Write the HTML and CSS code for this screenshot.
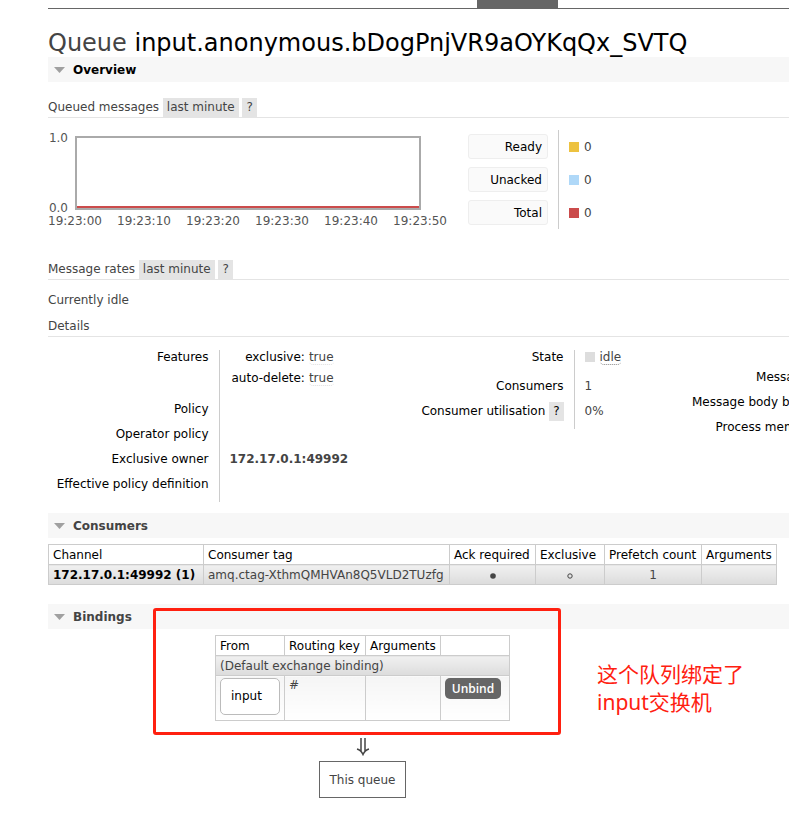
FILE: index.html
```html
<!DOCTYPE html>
<html lang="en">
<head>
<meta charset="utf-8">
<title>RabbitMQ Management</title>
<link rel="stylesheet" href="styles.css">
</head>
<body>
<nav class="menu"><span class="tab"></span></nav>
<main class="main">
  <h1>Queue <b>input.anonymous.bDogPnjVR9aOYKqQx_SVTQ</b></h1>

  <section>
    <h2 class="section-title current"><svg class="caret" viewBox="0 0 11 6"><path d="M0 0H11L5.500 6Z"/></svg>Overview</h2>
    <h3>Queued messages <a class="tag" href="#">last minute</a> <a class="tag help" href="#">?</a></h3>
    <div class="queued">
      <div class="chart">
        <div class="axis-y"><span>1.0</span><span>0.0</span></div>
        <div class="plot"></div>
        <div class="axis-x"><span>19:23:00</span><span>19:23:10</span><span>19:23:20</span><span>19:23:30</span><span>19:23:40</span><span>19:23:50</span></div>
      </div>
      <table class="legend">
        <tr><th><button class="series">Ready</button></th><td><i class="swatch ready"></i>0</td></tr>
        <tr><th><button class="series">Unacked</button></th><td><i class="swatch unacked"></i>0</td></tr>
        <tr><th><button class="series">Total</button></th><td><i class="swatch total"></i>0</td></tr>
      </table>
    </div>
    <h3>Message rates <a class="tag" href="#">last minute</a> <a class="tag help" href="#">?</a></h3>
    <p class="idle-note">Currently idle</p>
    <h3 class="details-title">Details</h3>
    <div class="details">
      <table class="facts policy">
        <tr class="features"><th>Features</th><td>
          <table class="mini">
            <tr><th>exclusive:</th><td><abbr class="faint">true</abbr></td></tr>
            <tr><th>auto-delete:</th><td><abbr class="faint">true</abbr></td></tr>
          </table>
        </td></tr>
        <tr><th>Policy</th><td></td></tr>
        <tr><th>Operator policy</th><td></td></tr>
        <tr><th>Exclusive owner</th><td><b>172.17.0.1:49992</b></td></tr>
        <tr><th>Effective policy definition</th><td></td></tr>
      </table>
      <table class="facts state">
        <tr class="state-row"><th>State</th><td><i class="swatch idle"></i><abbr>idle</abbr></td></tr>
        <tr><th>Consumers</th><td>1</td></tr>
        <tr><th>Consumer utilisation <a class="tag help" href="#">?</a></th><td>0%</td></tr>
      </table>
      <table class="facts totals">
        <tr><th>Messages <a class="tag help" href="#">?</a></th></tr>
        <tr><th>Message body bytes <a class="tag help" href="#">?</a></th></tr>
        <tr><th>Process memory <a class="tag help" href="#">?</a></th></tr>
      </table>
    </div>
  </section>

  <section>
    <h2 class="section-title"><svg class="caret" viewBox="0 0 11 6"><path d="M0 0H11L5.500 6Z"/></svg>Consumers</h2>
    <table class="list consumers">
      <thead><tr><th>Channel</th><th class="c-tag">Consumer tag</th><th class="c-ack">Ack required</th><th class="c-excl">Exclusive</th><th class="c-pre">Prefetch count</th><th class="c-args">Arguments</th></tr></thead>
      <tbody><tr class="alt"><td><a class="channel" href="#">172.17.0.1:49992 (1)</a></td><td>amq.ctag-XthmQMHVAn8Q5VLD2TUzfg</td><td class="center"><svg class="dot" viewBox="0 0 6 6"><circle cx="3" cy="3" r="2.800"/></svg></td><td class="center"><svg class="dot ring" viewBox="0 0 6 6"><circle cx="3" cy="3" r="2.200"/></svg></td><td class="center">1</td><td></td></tr></tbody>
    </table>
  </section>

  <section class="bindings">
    <h2 class="section-title"><svg class="caret" viewBox="0 0 11 6"><path d="M0 0H11L5.500 6Z"/></svg>Bindings</h2>
    <div class="binding-flow">
      <table class="list binding-table">
        <thead><tr><th class="b-from">From</th><th class="b-key">Routing key</th><th class="b-args">Arguments</th><th class="b-act"></th></tr></thead>
        <tbody>
          <tr class="alt"><td colspan="4">(Default exchange binding)</td></tr>
          <tr class="plain"><td><a class="exchange" href="#">input</a></td><td>#</td><td></td><td><button class="unbind">Unbind</button></td></tr>
        </tbody>
      </table>
      <svg class="arrow" viewBox="0 0 14 18"><path d="M5 0V14M9 0V14M1 11Q5 12 7 16.500Q9 12 13 11"/></svg>
      <div class="queue-box">This queue</div>
    </div>
    <div class="highlight"></div>
    <p class="note" lang="zh-CN">这个队列绑定了<br>input交换机</p>
  </section>
</main>
</body>
</html>
```
FILE: styles.css
```css
* { box-sizing: border-box; }
body {
  margin: 0;
  background: #fff;
  color: #444;
  font: 12px/14px "DejaVu Sans", Verdana, sans-serif;
  overflow-x: hidden;
}
a { color: inherit; text-decoration: none; }
button { font: inherit; }
table { border-collapse: collapse; }
th { color: #000; font-weight: normal; }
th, td { padding: 0; }
abbr { border-bottom: 1px dotted #888; border-radius: 4px; }
abbr.faint { border-color: #ddd; }

.menu {
  display: flex;
  height: 9px;
  margin-left: 48px;
  border-bottom: 1px solid #666;
}
.tab { width: 81px; margin-left: 429px; background: #666; }
.main { padding-left: 48px; overflow: hidden; }

h1 {
  margin: 20px 0 0;
  font-size: 24px;
  line-height: 28px;
  font-weight: normal;
  white-space: nowrap;
}
h1 b { color: #000; font-weight: normal; }
.section-title {
  display: flex;
  align-items: center;
  gap: 8px;
  height: 25px;
  margin: 0;
  padding-left: 6px;
  background: #f7f7f7;
  font-size: 12px;
}
.current { color: #000; }
.caret { width: 11px; height: 6px; fill: #a0a0a0; }
h3 {
  margin: 16px 0 0;
  border-bottom: 1px solid #e4e4e4;
  font-size: 12px;
  line-height: 19px;
  font-weight: normal;
}
.tag { display: inline-block; padding: 0 4px; background: #e4e4e4; line-height: 19px; }

.queued { display: flex; gap: 21px; margin: 12px 0 31px; }
.chart {
  display: grid;
  grid-template: 74px 16px / 26px 347px;
  width: 399px;
  margin-top: 6px;
  color: #545454;
}
.axis-y {
  display: flex;
  flex-direction: column;
  justify-content: space-between;
  padding-right: 6px;
  margin: -5px 0;
  text-align: right;
}
.plot { display: flex; margin-left: 1px; border: 2px solid #aaa; }
.plot::after { content: ""; flex: 1; align-self: flex-end; height: 2px; background: #cb4b4b; }
.axis-x {
  grid-column: 1 / 3;
  display: flex;
  justify-content: space-between;
  width: 399px;
  padding-top: 4px;
}
.legend th { padding: 4px 10px 4px 0; }
.legend td { border-left: 1px solid #ccc; padding-left: 10px; }
.series {
  display: block;
  width: 80px;
  height: 25px;
  padding: 0 5px;
  border: 1px solid #eee;
  border-radius: 3px;
  background: #fafafa;
  color: #000;
  text-align: right;
}
.swatch { display: inline-block; width: 10px; height: 10px; margin-right: 5px; vertical-align: -1px; }
.ready { background: #edc240; }
.unacked { background: #afd8f8; }
.total { background: #cb4b4b; }
.idle { background: #ddd; }

.idle-note { margin: 13px 0 0; }
h3.details-title { margin-top: 10px; }

.details { display: flex; align-items: flex-start; margin: 13px 0 11px; white-space: nowrap; }
.facts { flex: none; }
.facts > tbody > tr > th {
  height: 25px;
  padding: 0 10px 11px;
  text-align: right;
  vertical-align: top;
}
.facts > tbody > tr > td { border-left: 1px solid #ccc; padding: 0 10px; vertical-align: top; }
.policy { width: 363px; table-layout: fixed; }
.policy > tbody > tr > th { width: 171px; padding-left: 0; }
.features { height: 52px; }
.state { width: 271px; }
.state > tbody > tr > th { width: 163px; }
.state-row { height: 29px; }
.totals { margin-top: 20px; }
.facts .tag { margin: -3px 0; }
.mini th { padding: 0 4px 7px 2px; text-align: right; }
.mini td { padding: 0; vertical-align: top; }

.list th, .list td { border: 1px solid #ccc; padding: 3px 4px 2px; text-align: left; white-space: nowrap; }
.list .center { text-align: center; }
.alt td { background: linear-gradient(#f0f0f0, #dcdcdc); }
.plain td { background: linear-gradient(#f5f5f5, #fff); vertical-align: top; }
.consumers { width: 729px; margin: 6px 0 19px; table-layout: fixed; }
.c-tag { width: 246px; }
.c-ack { width: 86px; }
.c-excl { width: 69px; }
.c-pre { width: 97px; }
.c-args { width: 75px; }
.channel { color: #000; font-weight: bold; }
.dot { width: 6px; height: 6px; fill: #444; }
.ring { fill: none; stroke: #444; }

.bindings { position: relative; }
.binding-flow {
  display: flex;
  flex-direction: column;
  align-items: center;
  width: 629px;
  padding-top: 6px;
}
.binding-table { width: 295px; table-layout: fixed; }
.b-key { width: 81px; }
.b-args { width: 75px; }
.b-act { width: 69px; }
.list .plain td { padding-top: 2px; }
.exchange {
  display: block;
  height: 37px;
  margin-bottom: 3px;
  padding: 0 10px;
  border: 1px solid #bbb;
  border-radius: 5px;
  background: #fff;
  color: #000;
  line-height: 35px;
}
.unbind {
  display: block;
  width: 56px;
  height: 21px;
  padding: 0;
  border: 0;
  border-radius: 5px;
  background: #666;
  color: #fff;
  font: 600 12px/21px "Open Sans", "Noto Sans", sans-serif;
}
.arrow { width: 14px; height: 18px; margin: 17px 0 5px; fill: none; stroke: #444; stroke-width: 1.500; }
.queue-box { border: 1px solid #666; padding: 11px 10px 10px; line-height: 14px; }
.highlight {
  position: absolute;
  top: 4px;
  left: 105px;
  width: 408px;
  height: 127px;
  border: 3px solid #ff2010;
  border-radius: 3px;
}
.note {
  position: absolute;
  top: 56px;
  left: 549px;
  margin: 0;
  color: #ff2010;
  font: 21px/28px "Noto Sans", "Noto Sans CJK SC", sans-serif;
}
```
